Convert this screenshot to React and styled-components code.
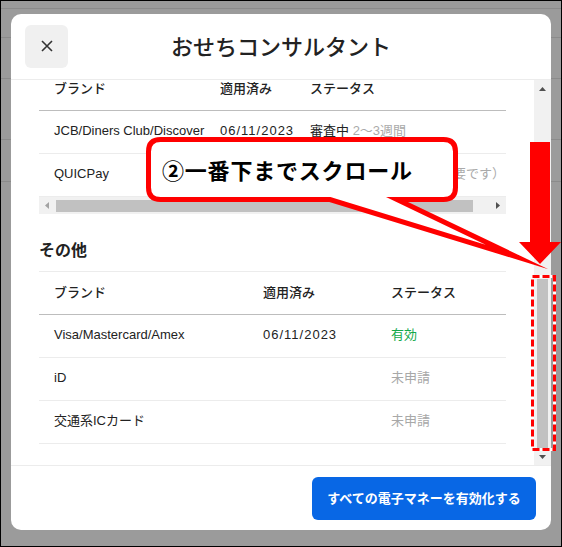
import React from 'react';
import styled, { createGlobalStyle } from 'styled-components';

const Global = createGlobalStyle`
  html, body { margin: 0; padding: 0; }
  body {
    width: 562px; height: 547px; overflow: hidden;
    font-family: "Liberation Sans", "Noto Sans CJK JP", sans-serif;
    color: #222;
  }
  * { box-sizing: border-box; }
`;

const Frame = styled.div`
  position: relative;
  width: 562px;
  height: 547px;
  background: #9b9b9b;
  overflow: hidden;
  &::after {
    content: '';
    position: absolute;
    inset: 0;
    border: 1px solid #000;
    pointer-events: none;
    z-index: 10;
  }
`;

const BackPage = styled.div`
  display: flex;
  flex-direction: column;
`;

const BackRow = styled.div`
  height: ${p => p.$h}px;
  border-bottom: 1px solid #8b8b8b;
`;

const Modal = styled.div`
  position: absolute;
  left: 11px;
  top: 14px;
  width: 540px;
  height: 516px;
  background: #fff;
  border-radius: 10px;
  display: flex;
  flex-direction: column;
  overflow: hidden;
`;

const Header = styled.header`
  height: 66px;
  flex: none;
  display: grid;
  grid-template-columns: 1fr auto 1fr;
  align-items: center;
  padding: 0 14px 1px;
  border-bottom: 1px solid #ececec;
`;

const CloseButton = styled.button`
  width: 43px;
  height: 43px;
  border: none;
  border-radius: 6px;
  background: #f0f0f0;
  display: flex;
  align-items: center;
  justify-content: center;
  padding: 0;
  justify-self: start;
`;

const Title = styled.h1`
  margin: 0 0 2px;
  font-family: "Noto Sans CJK JP", sans-serif;
  font-size: 22px;
  font-weight: 500;
  color: #222;
  line-height: 1;
`;

const Body = styled.div`
  height: 385px;
  flex: none;
  display: flex;
`;

const Viewport = styled.div`
  flex: 1;
  overflow: hidden;
`;

const Content = styled.div`
  padding: 0 28px 0 28px;
`;

const TableScroller = styled.div`
  overflow: hidden;
`;

const Table = styled.div`
  min-width: ${p => p.$minWidth || 0}px;
  border-top: ${p => (p.$bordered ? '1px solid #ececec' : 'none')};
`;

const Row = styled.div`
  height: 43px;
  display: grid;
  grid-template-columns: ${p => p.$cols};
  align-items: center;
  padding: 0 0 3px 15px;
  font-size: 13px;
  line-height: 14px;
  white-space: nowrap;
  border-bottom: 1px solid ${p => (p.$head ? '#bdbdbd' : '#ececec')};
  font-weight: ${p => (p.$head ? 500 : 400)};
  font-family: ${p => (p.$head ? '"Noto Sans CJK JP", sans-serif' : '"Liberation Sans", "Noto Sans CJK JP", sans-serif')};
`;

const Cell = styled.span`
  color: ${p => p.$color || '#222'};
  letter-spacing: ${p => (p.$date ? '1px' : 'normal')};
`;

const Muted = styled.span`
  color: #aaa;
`;

const HScroll = styled.div`
  height: 17px;
  background: #f1f1f1;
  display: flex;
  align-items: center;
`;

const ArrowBox = styled.div`
  width: ${p => (p.$vertical ? '17px' : '16px')};
  height: 17px;
  flex: none;
  display: flex;
  align-items: center;
  justify-content: center;
`;

const HThumb = styled.div`
  width: 417px;
  height: 12px;
  margin-left: 1px;
  background: #c1c1c1;
  flex: none;
`;

const Spacer = styled.div`
  flex: 1;
`;

const SectionTitle = styled.h2`
  margin: 25px 0 8px;
  height: 24px;
  line-height: 20px;
  font-family: "Noto Sans CJK JP", sans-serif;
  font-size: 16px;
  font-weight: 700;
  color: #222;
`;

const VScroll = styled.div`
  width: 17px;
  flex: none;
  background: #f1f1f1;
  display: flex;
  flex-direction: column;
  align-items: center;
`;

const VThumb = styled.div`
  width: 11px;
  height: 169px;
  background: #c1c1c1;
  flex: none;
`;

const Footer = styled.footer`
  flex: 1;
  border-top: 1px solid #ececec;
  display: flex;
  justify-content: flex-end;
  align-items: flex-start;
  padding: 11px 15px 0;
`;

const PrimaryButton = styled.button`
  width: 224px;
  height: 43px;
  border: none;
  border-radius: 6px;
  background: #0867e5;
  color: #fff;
  font-family: "Noto Sans CJK JP", sans-serif;
  font-size: 13px;
  font-weight: 700;
  padding: 0 0 2px;
`;

const Annotation = styled.svg`
  position: absolute;
  left: 0;
  top: 0;
  width: 562px;
  height: 547px;
  pointer-events: none;
  z-index: 5;
`;

const CalloutText = styled.div`
  position: absolute;
  left: 146px;
  top: 137px;
  width: 312px;
  height: 65px;
  display: flex;
  align-items: center;
  padding: 0 0 2px 16px;
  font-family: "Noto Sans CJK JP", sans-serif;
  font-size: 22px;
  font-weight: 700;
  letter-spacing: 0.8px;
  color: #000;
  z-index: 6;
`;

const Tri = ({ dir, color = '#505050' }) => {
  const pts = {
    up: '0,4 3.5,0 7,4',
    down: '0,0 7,0 3.5,4',
    left: '4,0 4,7 0,3.5',
    right: '0,0 0,7 4,3.5',
  }[dir];
  const horizontal = dir === 'left' || dir === 'right';
  return (
    <svg width={horizontal ? 4 : 7} height={horizontal ? 7 : 4} viewBox={horizontal ? '0 0 4 7' : '0 0 7 4'}>
      <polygon points={pts} fill={color} />
    </svg>
  );
};

const topCols = '166px 90px 1fr';
const bottomCols = '209px 128px 1fr';

const others = [
  { brand: 'Visa/Mastercard/Amex', date: '06/11/2023', status: '有効', color: '#12a84a' },
  { brand: 'iD', date: '', status: '未申請', color: '#a8a8a8' },
  { brand: '交通系ICカード', date: '', status: '未申請', color: '#a8a8a8' },
];

export default function App() {
  return (
    <>
      <Global />
      <Frame>
        <BackPage>
          <BackRow $h={9} />
          <BackRow $h={29} />
          <BackRow $h={41} />
          <BackRow $h={61} />
          <BackRow $h={42} />
        </BackPage>

        <Modal>
          <Header>
            <CloseButton aria-label="close">
              <svg width="12" height="12" viewBox="0 0 12 12">
                <path d="M1 1 L11 11 M11 1 L1 11" stroke="#333" strokeWidth="1.6" fill="none" />
              </svg>
            </CloseButton>
            <Title>おせちコンサルタント</Title>
            <span />
          </Header>

          <Body>
            <Viewport>
              <Content style={{ marginTop: -12 }}>
                <TableScroller>
                  <Table $minWidth={520}>
                    <Row $head $cols={topCols}>
                      <Cell>ブランド</Cell>
                      <Cell>適用済み</Cell>
                      <Cell>ステータス</Cell>
                    </Row>
                    <Row $cols={topCols}>
                      <Cell>JCB/Diners Club/Discover</Cell>
                      <Cell $date>06/11/2023</Cell>
                      <Cell>審査中 <Muted>2～3週間</Muted></Cell>
                    </Row>
                    <Row $cols={topCols}>
                      <Cell>QUICPay</Cell>
                      <Cell></Cell>
                      <Cell $color="#aaa">申請不可（別途申込が必要です）</Cell>
                    </Row>
                  </Table>
                </TableScroller>
                <HScroll>
                  <ArrowBox><Tri dir="left" color="#a3a3a3" /></ArrowBox>
                  <HThumb />
                  <Spacer />
                  <ArrowBox><Tri dir="right" /></ArrowBox>
                </HScroll>

                <SectionTitle>その他</SectionTitle>
                <Table $bordered>
                  <Row $head $cols={bottomCols}>
                    <Cell>ブランド</Cell>
                    <Cell>適用済み</Cell>
                    <Cell>ステータス</Cell>
                  </Row>
                  {others.map(o => (
                    <Row key={o.brand} $cols={bottomCols}>
                      <Cell>{o.brand}</Cell>
                      <Cell $date>{o.date}</Cell>
                      <Cell $color={o.color}>{o.status}</Cell>
                    </Row>
                  ))}
                </Table>
              </Content>
            </Viewport>
            <VScroll>
              <ArrowBox $vertical><Tri dir="up" /></ArrowBox>
              <Spacer />
              <VThumb />
              <ArrowBox $vertical><Tri dir="down" /></ArrowBox>
            </VScroll>
          </Body>

          <Footer>
            <PrimaryButton>すべての電子マネーを有効化する</PrimaryButton>
          </Footer>
        </Modal>

        <Annotation viewBox="0 0 562 547">
          <path
            d="M160.5 139.5 H443.5 Q455.5 139.5 455.5 151.5 V187.5 Q455.5 199.5 443.5 199.5 H397 L517 257 L330 199.5 H160.5 Q148.5 199.5 148.5 187.5 V151.5 Q148.5 139.5 160.5 139.5 Z"
            fill="#fff"
            stroke="#ff0000"
            strokeWidth="5"
            strokeLinejoin="miter"
            strokeMiterlimit="20"
          />
          <polygon points="530,142 550,142 550,242 561,242 540,264 519,242 530,242" fill="#ff0000" />
          <rect x="532.5" y="276.5" width="22" height="173" fill="none" stroke="#fff" strokeWidth="3" />
          <rect x="532.5" y="276.5" width="22" height="173" fill="none" stroke="#ff0000" strokeWidth="3" strokeDasharray="7 3" />
        </Annotation>
        <CalloutText>②一番下までスクロール</CalloutText>
      </Frame>
    </>
  );
}
